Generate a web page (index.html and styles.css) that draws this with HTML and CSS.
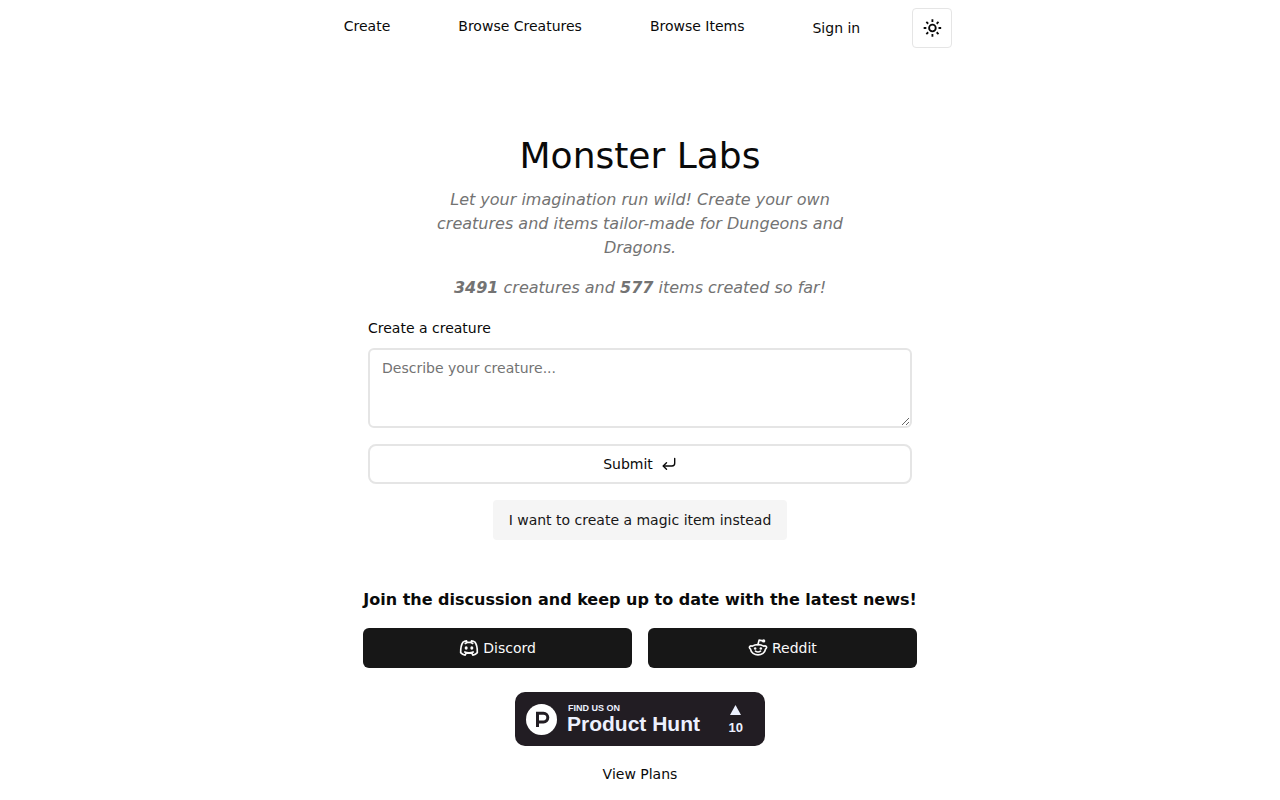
FILE: index.html
```
<!DOCTYPE html>
<html lang="en">
<head>
    <meta charset="UTF-8">
    <meta name="viewport" content="width=device-width, initial-scale=1.0">
    <title>Monster Labs</title>
    <link rel="stylesheet" href="styles.css">
</head>
<body>

    <header>
        <nav class="nav">
            <a href="#" class="nav-link">Create</a>
            <a href="#" class="nav-link">Browse Creatures</a>
            <a href="#" class="nav-link">Browse Items</a>
            <button type="button" class="button">Sign in</button>
            <button type="button" class="button theme-toggle" aria-label="Toggle theme">
                <svg width="20" height="20" viewBox="0 0 24 24" fill="none" stroke="currentColor" stroke-width="2.200">
                    <circle cx="12.500" cy="12" r="4"/>
                    <path d="M12.500 1.500v3.200M12.500 19.300v3.200M5.200 4.700l2.200 2.200M17.600 17.100l2.200 2.200M2 12h3.200M19.800 12H23M7.400 17.100l-2.200 2.200M19.800 4.700l-2.200 2.200"/>
                </svg>
            </button>
        </nav>
    </header>

    <main>
        <section class="intro">
            <h1>Monster Labs</h1>
            <p>Let your imagination run wild! Create your own creatures and items tailor-made for Dungeons and Dragons.</p>
            <p><strong>3491</strong> creatures and <strong>577</strong> items created so far!</p>
        </section>

        <form class="create-form">
            <label for="prompt">Create a creature</label>
            <textarea id="prompt" name="prompt" placeholder="Describe your creature..."></textarea>
            <button type="submit" class="button submit">
                Submit
                <svg width="16" height="16" viewBox="0 0 16 16" fill="none" stroke="currentColor" stroke-width="1.400" stroke-linecap="round" stroke-linejoin="round">
                    <path d="M5.500 6.800 2.200 10l3.300 3.200"/>
                    <path d="M13.700 2.500V7.300a2.700 2.700 0 0 1-2.700 2.700H2.500"/>
                </svg>
            </button>
            <button type="button" class="button secondary">I want to create a magic item instead</button>
        </form>

        <section class="community">
            <h2>Join the discussion and keep up to date with the latest news!</h2>
            <div class="social">
                <a href="#" class="button dark">
                    <svg width="20" height="20" viewBox="0 0 24 24" fill="none" stroke="currentColor" stroke-width="2" stroke-linejoin="round">
                        <path d="M9.600 5.400 9 3.500C7.300 3.700 5.800 4.300 4.900 4.900 2.700 8 1.900 12 2 17.600c1.400 1.600 3.200 2.500 5.400 2.900l1.300-2.700c2.200.5 4.400.5 6.600 0l1.300 2.700c2.200-.4 4-1.300 5.400-2.900.1-5.600-.7-9.600-2.900-12.700C18.200 4.300 16.700 3.700 15 3.500l-.6 1.900c-1.600-.3-3.200-.3-4.800 0Z"/>
                        <path d="M6.200 16.600c3.700 1.700 7.900 1.700 11.600 0M6.800 7c1-.6 1.800-.9 2.800-1.300M17.200 7c-1-.6-1.800-.9-2.800-1.300"/>
                        <ellipse cx="8.600" cy="12" rx="1.800" ry="2" fill="currentColor" stroke="none"/>
                        <ellipse cx="15.400" cy="12" rx="1.800" ry="2" fill="currentColor" stroke="none"/>
                    </svg>
                    Discord
                </a>
                <a href="#" class="button dark">
                    <svg width="20" height="20" viewBox="0 0 24 24" fill="none" stroke="currentColor" stroke-width="2" stroke-linecap="round" stroke-linejoin="round">
                        <path d="M12 8c2.600 0 5 .6 6.800 1.800 2.400-1.300 5.200 1.200 2.200 3.500-.6 4.200-4.600 7-9 7s-8.400-2.800-9-7c-3-2.300-.2-4.800 2.200-3.500C7 8.600 9.400 8 12 8Z"/>
                        <path d="M12 8l1.300-5.500 4.700 1"/>
                        <path d="M9 15.800c1.800 1.200 4.200 1.200 6 0"/>
                        <circle cx="18.800" cy="3.500" r="2" fill="currentColor" stroke="none"/>
                        <circle cx="8.600" cy="12.500" r="1.500" fill="currentColor" stroke="none"/>
                        <circle cx="15.400" cy="12.500" r="1.500" fill="currentColor" stroke="none"/>
                    </svg>
                    Reddit
                </a>
            </div>
        </section>

        <!-- Product Hunt badge -->
        <a href="#" class="product-hunt">
            <svg width="31" height="31" viewBox="0 0 31 31">
                <circle cx="15.500" cy="15.500" r="15.500" fill="#fff"/>
                <path d="M11.500 23V9.300h6a4.300 4.300 0 0 1 0 8.600h-6" fill="none" stroke="#221d23" stroke-width="3"/>
            </svg>
            <span class="ph-text">
                <span class="ph-small">FIND US ON</span>
                <span class="ph-name">Product Hunt</span>
            </span>
            <span class="ph-votes">
                <svg width="11" height="10" viewBox="0 0 11 10"><path d="M5.500 0 11 10H0z" fill="currentColor"/></svg>
                10
            </span>
        </a>

        <a href="#" class="plans">View Plans</a>
    </main>

</body>
</html>
```
FILE: styles.css
```
* {
    box-sizing: border-box;
}
body {
    margin: 0;
    font-family: "DejaVu Sans", sans-serif;
    font-size: 14px;
    line-height: 20px;
    color: #0a0a0a;
    background-color: #fff;
}
a {
    color: inherit;
    text-decoration: none;
}
h1, h2, p {
    margin: 0;
}

/* Navigation */
.nav {
    display: flex;
    justify-content: center;
    align-items: flex-start;
    gap: 36px;
    padding: 8px;
}
.nav-link {
    padding: 8px 16px;
}

/* Buttons */
.button {
    display: flex;
    align-items: center;
    justify-content: center;
    height: 40px;
    padding: 0 16px;
    border: none;
    border-radius: 6px;
    background-color: transparent;
    color: #0a0a0a;
    font: inherit;
    cursor: pointer;
}
.theme-toggle {
    width: 40px;
    padding: 0;
    border: 1px solid #e5e5e5;
    border-radius: 4px;
}
.submit {
    gap: 8px;
    width: 100%;
    margin-top: 16px;
    border: 2px solid #e5e5e5;
    border-radius: 8px;
}
.secondary {
    margin: 16px auto 0;
    background-color: #f5f5f5;
    color: #171717;
    border-radius: 4px;
}
.dark {
    flex: 1;
    gap: 4px;
    background-color: #171717;
    color: #fafafa;
}

/* Page content */
main {
    display: flex;
    flex-direction: column;
    align-items: center;
    padding: 80px 16px 16px;
}
.intro {
    max-width: 416px;
    text-align: center;
}
.intro h1 {
    font-size: 36px;
    line-height: 40px;
    font-weight: normal;
    margin-bottom: 12px;
}
.intro p {
    font-size: 16px;
    line-height: 24px;
    font-style: italic;
    color: #737373;
}
.intro p + p {
    margin-top: 16px;
}
.create-form {
    width: 100%;
    max-width: 544px;
    margin-top: 18px;
}
.create-form label {
    display: block;
    margin-bottom: 10px;
}
textarea {
    display: block;
    width: 100%;
    height: 80px;
    padding: 8px 12px;
    border: 2px solid #e5e5e5;
    border-radius: 6px;
    background-color: #fff;
    font: inherit;
    resize: vertical;
}
textarea::placeholder {
    color: #737373;
}
.community {
    margin-top: 48px;
}
.community h2 {
    font-size: 16px;
    line-height: 24px;
}
.social {
    display: flex;
    gap: 16px;
    margin-top: 16px;
}

/* Product Hunt badge */
.product-hunt {
    display: flex;
    align-items: center;
    width: 250px;
    height: 54px;
    margin-top: 24px;
    padding: 0 22px 0 11px;
    border-radius: 10px;
    background-color: #221d23;
    color: #edf1ff;
    font-family: "Liberation Sans", Arial, sans-serif;
    font-weight: bold;
}
.ph-text {
    display: flex;
    flex-direction: column;
    flex: 1;
    margin-left: 10px;
}
.ph-small {
    font-size: 9px;
    line-height: 10px;
    padding-left: 1px;
}
.ph-name {
    font-size: 21px;
    line-height: 22px;
}
.ph-votes {
    display: flex;
    flex-direction: column;
    align-items: center;
    gap: 6px;
    padding-top: 2px;
    font-size: 13px;
    line-height: 14px;
}
.plans {
    margin-top: 18px;
}
```
